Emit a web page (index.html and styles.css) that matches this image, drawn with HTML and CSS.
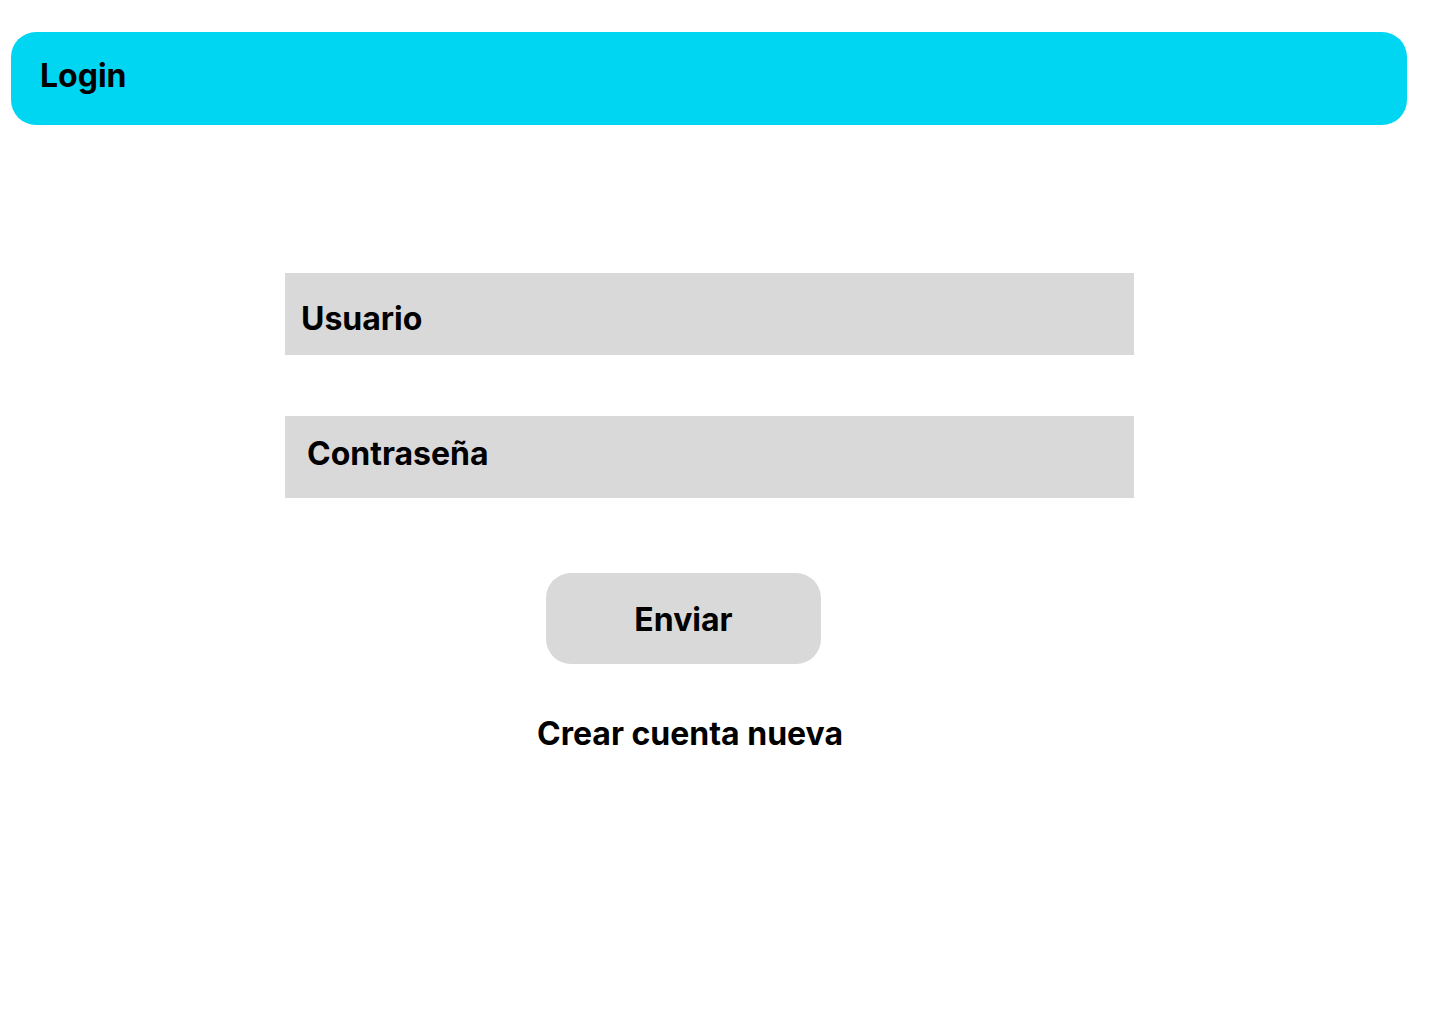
FILE: index.html
```html
<!DOCTYPE html>
<html lang="es">
<head>
<meta charset="utf-8">
<title>Login</title>
<link rel="stylesheet" href="styles.css">
</head>
<body>
<header class="topbar"><h1 class="topbar-title">Login</h1></header>
<main class="form">
  <div class="field field-user"><span class="field-label">Usuario</span></div>
  <div class="field field-pass"><span class="field-label">Contraseña</span></div>
  <button class="submit" type="button">Enviar</button>
  <a class="create-link" href="#">Crear cuenta nueva</a>
</main>
</body>
</html>
```
FILE: styles.css
```css
* { box-sizing: border-box; }
html, body { margin: 0; padding: 0; background: #ffffff; }
body {
  font-family: Inter, "Noto Sans", sans-serif;
  color: #000000;
  width: 1440px;
  height: 1024px;
  padding-top: 32px;
}
.topbar {
  margin-left: 11px;
  width: 1396px;
  height: 93px;
  background: #00d5f2;
  border-radius: 25px;
  display: flex;
  align-items: flex-start;
  padding: 24px 0 0 29px;
}
.topbar-title {
  margin: 0;
  font-size: 32px;
  font-weight: 700;
  line-height: 39px;
}
.form {
  margin-left: 285px;
  width: 849px;
  padding-top: 148px;
  display: flex;
  flex-direction: column;
  align-items: flex-start;
}
.field {
  width: 849px;
  height: 82px;
  background: #d9d9d9;
}
.field-label {
  display: block;
  font-size: 32px;
  font-weight: 700;
  line-height: 39px;
}
.field-user { padding: 26px 0 0 16px; }
.field-pass { margin-top: 61px; padding: 18px 0 0 22px; }
.submit {
  margin-top: 75px;
  margin-left: 261px;
  width: 275px;
  height: 91px;
  border: none;
  border-radius: 25px;
  background: #d9d9d9;
  font-family: inherit;
  font-size: 32px;
  font-weight: 700;
  line-height: 39px;
  color: #000;
  padding: 2px 0 0 0;
}
.create-link {
  margin-top: 50px;
  margin-left: 252px;
  font-size: 32px;
  font-weight: 700;
  line-height: 39px;
  color: #000;
  text-decoration: none;
}
```
